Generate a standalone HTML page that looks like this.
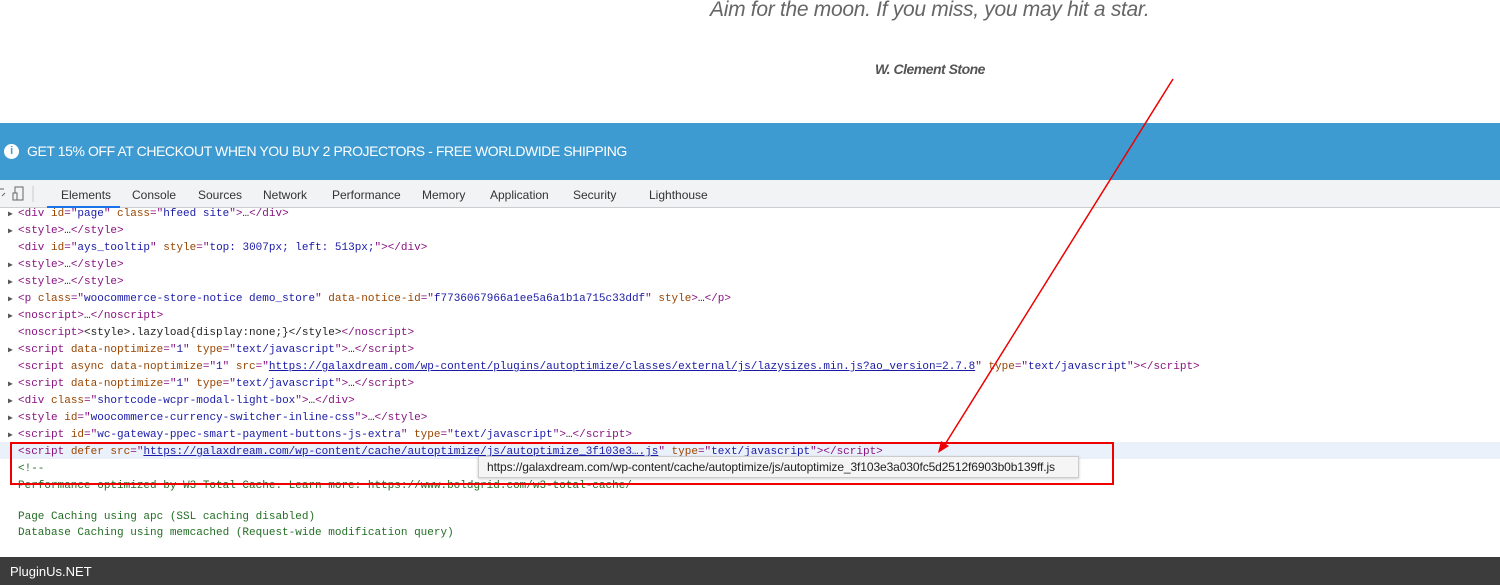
<!DOCTYPE html>
<html><head><meta charset="utf-8"><style>
*{margin:0;padding:0;box-sizing:border-box}
body{width:1500px;height:585px;overflow:hidden;background:#fff;position:relative;font-family:"Liberation Sans",sans-serif}
.q{position:absolute;left:710px;top:-2px;font-size:21px;font-style:italic;color:#666;letter-spacing:-0.3px}
.a{position:absolute;left:875px;top:61px;font-size:14px;font-style:italic;font-weight:bold;color:#555;letter-spacing:-0.5px}
.ban{position:absolute;left:0;top:123px;width:1500px;height:57px;background:#3e9bd2;color:#fff;font-size:14px;letter-spacing:-0.42px}
.ban span{position:absolute;left:27px;top:20px}
.ban i{position:absolute;left:4px;top:21px;width:15px;height:15px;border-radius:50%;background:#fff;color:#3e9bd2;font-style:normal;font-weight:bold;font-size:11px;text-align:center;line-height:15px}
.tabs{position:absolute;left:0;top:180px;width:1500px;height:28px;background:#f1f3f4;border-bottom:1px solid #cbcdd1;font-size:12px;color:#333}
.tabs span{position:absolute;top:8px}
.ul{position:absolute;left:47px;top:26px;width:73px;height:2px;background:#1a73e8}
.code{position:absolute;left:0;top:2px;font-family:"Liberation Mono",monospace;font-size:11px;white-space:pre}
.l{position:absolute;left:18px;height:17px;line-height:17px}
.t{color:#881280}.n{color:#994500}.v{color:#1a1aa6}.c{color:#236e25}.k{color:#222}
.u{color:#1a1aa6;text-decoration:underline}
.tri{position:absolute;left:8px;font-size:8px;color:#555}
.hl{position:absolute;left:0;top:442px;width:1500px;height:17px;background:#eaf1fb}
.foot{position:absolute;left:0;top:557px;width:1500px;height:28px;background:#3c3c3c;color:#fff;font-size:13px}
.foot span{position:absolute;left:10px;top:7px}
.tip{position:absolute;left:478px;top:456px;width:601px;height:22px;background:#f5f5f5;border:1px solid #ccc;box-shadow:0 1px 3px rgba(0,0,0,.2);font-size:12px;color:#222;padding:3px 0 0 8px;white-space:nowrap;letter-spacing:-0.1px}
.box{position:absolute;left:10px;top:442px;width:1104px;height:43px;border:2px solid #e00}
</style></head><body>
<div class="q">Aim for the moon. If you miss, you may hit a star.</div>
<div class="a">W. Clement Stone</div>
<div class="ban"><i>i</i><span>GET 15% OFF AT CHECKOUT WHEN YOU BUY 2 PROJECTORS - FREE WORLDWIDE SHIPPING</span></div>
<div class="tabs">
<svg style="position:absolute;left:0;top:6px" width="36" height="16"><path d="M0 3h4M2 10l3-3" stroke="#666" fill="none"/><rect x="15" y="1" width="8" height="13" stroke="#666" fill="none"/><rect x="13" y="7" width="4" height="7" stroke="#666" fill="#f1f3f4"/><path d="M33 0v16" stroke="#ccc"/></svg>
<span style="left:61px">Elements</span><span style="left:132px">Console</span><span style="left:198px">Sources</span><span style="left:263px">Network</span><span style="left:332px">Performance</span><span style="left:422px">Memory</span><span style="left:490px">Application</span><span style="left:573px">Security</span><span style="left:649px">Lighthouse</span>
<div class="ul"></div></div>
<div class="hl"></div>
<div class="code">
<span class="tri" style="top:207px">▶</span><div class="l" style="top:204px"><span class="t">&lt;div </span><span class="n">id</span><span class="t">="</span><span class="v">page</span><span class="t">" </span><span class="n">class</span><span class="t">="</span><span class="v">hfeed site</span><span class="t">"&gt;</span><span class="k">…</span><span class="t">&lt;/div&gt;</span></div>
<span class="tri" style="top:224px">▶</span><div class="l" style="top:221px"><span class="t">&lt;style&gt;</span><span class="k">…</span><span class="t">&lt;/style&gt;</span></div>
<div class="l" style="top:238px"><span class="t">&lt;div </span><span class="n">id</span><span class="t">="</span><span class="v">ays_tooltip</span><span class="t">" </span><span class="n">style</span><span class="t">="</span><span class="v">top: 3007px; left: 513px;</span><span class="t">"&gt;&lt;/div&gt;</span></div>
<span class="tri" style="top:258px">▶</span><div class="l" style="top:255px"><span class="t">&lt;style&gt;</span><span class="k">…</span><span class="t">&lt;/style&gt;</span></div>
<span class="tri" style="top:275px">▶</span><div class="l" style="top:272px"><span class="t">&lt;style&gt;</span><span class="k">…</span><span class="t">&lt;/style&gt;</span></div>
<span class="tri" style="top:292px">▶</span><div class="l" style="top:289px"><span class="t">&lt;p </span><span class="n">class</span><span class="t">="</span><span class="v">woocommerce-store-notice demo_store</span><span class="t">" </span><span class="n">data-notice-id</span><span class="t">="</span><span class="v">f7736067966a1ee5a6a1b1a715c33ddf</span><span class="t">" </span><span class="n">style</span><span class="t">&gt;</span><span class="k">…</span><span class="t">&lt;/p&gt;</span></div>
<span class="tri" style="top:309px">▶</span><div class="l" style="top:306px"><span class="t">&lt;noscript&gt;</span><span class="k">…</span><span class="t">&lt;/noscript&gt;</span></div>
<div class="l" style="top:323px"><span class="t">&lt;noscript&gt;</span><span class="k">&lt;style&gt;.lazyload{display:none;}&lt;/style&gt;</span><span class="t">&lt;/noscript&gt;</span></div>
<span class="tri" style="top:343px">▶</span><div class="l" style="top:340px"><span class="t">&lt;script </span><span class="n">data-noptimize</span><span class="t">="</span><span class="v">1</span><span class="t">" </span><span class="n">type</span><span class="t">="</span><span class="v">text/javascript</span><span class="t">"&gt;</span><span class="k">…</span><span class="t">&lt;/script&gt;</span></div>
<div class="l" style="top:357px"><span class="t">&lt;script </span><span class="n">async data-noptimize</span><span class="t">="</span><span class="v">1</span><span class="t">" </span><span class="n">src</span><span class="t">="</span><span class="u">https://galaxdream.com/wp-content/plugins/autoptimize/classes/external/js/lazysizes.min.js?ao_version=2.7.8</span><span class="t">" </span><span class="n">type</span><span class="t">="</span><span class="v">text/javascript</span><span class="t">"&gt;&lt;/script&gt;</span></div>
<span class="tri" style="top:377px">▶</span><div class="l" style="top:374px"><span class="t">&lt;script </span><span class="n">data-noptimize</span><span class="t">="</span><span class="v">1</span><span class="t">" </span><span class="n">type</span><span class="t">="</span><span class="v">text/javascript</span><span class="t">"&gt;</span><span class="k">…</span><span class="t">&lt;/script&gt;</span></div>
<span class="tri" style="top:394px">▶</span><div class="l" style="top:391px"><span class="t">&lt;div </span><span class="n">class</span><span class="t">="</span><span class="v">shortcode-wcpr-modal-light-box</span><span class="t">"&gt;</span><span class="k">…</span><span class="t">&lt;/div&gt;</span></div>
<span class="tri" style="top:411px">▶</span><div class="l" style="top:408px"><span class="t">&lt;style </span><span class="n">id</span><span class="t">="</span><span class="v">woocommerce-currency-switcher-inline-css</span><span class="t">"&gt;</span><span class="k">…</span><span class="t">&lt;/style&gt;</span></div>
<span class="tri" style="top:428px">▶</span><div class="l" style="top:425px"><span class="t">&lt;script </span><span class="n">id</span><span class="t">="</span><span class="v">wc-gateway-ppec-smart-payment-buttons-js-extra</span><span class="t">" </span><span class="n">type</span><span class="t">="</span><span class="v">text/javascript</span><span class="t">"&gt;</span><span class="k">…</span><span class="t">&lt;/script&gt;</span></div>
<div class="l" style="top:442px"><span class="t">&lt;script </span><span class="n">defer src</span><span class="t">="</span><span class="u">https://galaxdream.com/wp-content/cache/autoptimize/js/autoptimize_3f103e3….js</span><span class="t">" </span><span class="n">type</span><span class="t">="</span><span class="v">text/javascript</span><span class="t">"&gt;&lt;/script&gt;</span></div>
<div class="l c" style="top:459px">&lt;!--</div>
<div class="l c" style="top:476px">Performance optimized by W3 Total Cache. Learn more: https://www.boldgrid.com/w3-total-cache/</div>
<div class="l c" style="top:507px">Page Caching using apc (SSL caching disabled)</div>
<div class="l c" style="top:523px">Database Caching using memcached (Request-wide modification query)</div>
</div>
<div class="tip">https://galaxdream.com/wp-content/cache/autoptimize/js/autoptimize_3f103e3a030fc5d2512f6903b0b139ff.js</div>
<div class="box"></div>
<svg style="position:absolute;left:0;top:0" width="1500" height="585"><path d="M1173 79L944 446" stroke="#e00" stroke-width="1.5"/><path d="M938 453l3-12 8 5z" fill="#e00"/></svg>
<div class="foot"><span>PluginUs.NET</span></div>
</body></html>
